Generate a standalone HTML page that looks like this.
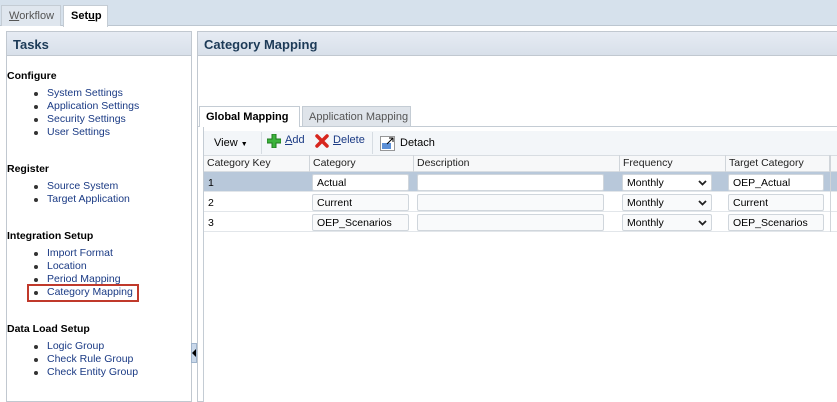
<!DOCTYPE html>
<html><head><style>
*{box-sizing:border-box;margin:0;padding:0;white-space:nowrap}
body{width:837px;height:402px;overflow:hidden;background:#fff;font-family:"Liberation Sans",Arial,sans-serif;font-size:11px;position:relative;color:#000}
.a{position:absolute}
.top{left:0;top:0;width:837px;height:26px;background:#d6e1ec;border-bottom:1px solid #bcc6d0}
.tab{top:5px;height:21px;border:1px solid #c4ccd4;border-bottom:none;font-size:11px;padding:4px 7px 0}
.hdr{height:25px;background:linear-gradient(#e6ebf3,#d8e0ea);border:1px solid #c1c8d0;font-weight:bold;font-size:13px;color:#1c3a57;padding:5px 6px}
.sec{font-weight:bold;font-size:10.5px;left:7px}
ul{position:absolute;left:47px;font-size:10.5px;color:#1a3a84;list-style:none;line-height:13px}
ul li:before{content:"";position:absolute;left:-13px;margin-top:5px;width:4px;height:4px;border-radius:2px;background:#333}
.th{top:155px;height:17px;border-right:1px solid #d0d5da;font-size:10.5px;padding:2px 3px;color:#222}
.row{left:204px;width:633px;height:20px;border-bottom:1px solid #e2e6ea}
.c{font-size:10.5px;padding:4px 3px;position:absolute}
.in{position:absolute;height:17px;border:1px solid #d0d6dc;border-radius:2px;background:#fff;font-size:10.5px;padding:2px 4px}
.dd{position:absolute;right:4px;top:5px}
</style></head><body>
<div class="a top"></div>
<div class="a tab" style="left:1px;width:60px;background:#dfe6ee;color:#555"><u>W</u>orkflow</div>
<div class="a tab" style="left:63px;width:45px;background:#fff;font-weight:bold;height:22px">Set<u>u</u>p</div>
<div class="a" style="left:6px;top:31px;width:186px;height:371px;border:1px solid #c1c8d0;background:#fff"></div>
<div class="a hdr" style="left:6px;top:31px;width:186px">Tasks</div>
<div class="a sec" style="top:70px">Configure</div>
<ul style="top:87px"><li>System Settings</li><li>Application Settings</li><li>Security Settings</li><li>User Settings</li></ul>
<div class="a sec" style="top:163px">Register</div>
<ul style="top:180px"><li>Source System</li><li>Target Application</li></ul>
<div class="a sec" style="top:230px">Integration Setup</div>
<ul style="top:247px"><li>Import Format</li><li>Location</li><li>Period Mapping</li><li>Category Mapping</li></ul>
<div class="a" style="left:27px;top:284px;width:112px;height:18px;border:2px solid #c0392b"></div>
<div class="a sec" style="top:323px">Data Load Setup</div>
<ul style="top:340px"><li>Logic Group</li><li>Check Rule Group</li><li>Check Entity Group</li></ul>
<div class="a" style="left:191px;top:343px;width:6px;height:20px;background:#c9d8ea;border:1px solid #9fb4cc"></div>
<div class="a" style="left:192px;top:349px;width:0;height:0;border-top:4px solid transparent;border-bottom:4px solid transparent;border-right:4px solid #000"></div>
<div class="a" style="left:197px;top:31px;width:645px;height:371px;border:1px solid #c1c8d0;background:#fff"></div>
<div class="a hdr" style="left:197px;top:31px;width:645px">Category Mapping</div>
<div class="a" style="left:198px;top:126px;width:639px;height:1px;background:#c4ccd4"></div>
<div class="a" style="left:203px;top:127px;width:634px;height:275px;border-left:1px solid #c4ccd4;background:#fff"></div>
<div class="a tab" style="left:199px;top:106px;width:101px;height:21px;background:#fff;font-weight:bold;padding:4px 6px">Global Mapping</div>
<div class="a tab" style="left:302px;top:106px;width:109px;height:20px;background:#dfe4ea;color:#555;padding:4px 6px">Application Mapping</div>
<div class="a" style="left:204px;top:131px;width:633px;height:24px;background:#f3f6f9"></div>
<div class="a" style="left:214px;top:137px">View <span style="font-size:7px">▼</span></div>
<div class="a" style="left:261px;top:132px;width:1px;height:22px;background:#d6dce2"></div>
<svg class="a" style="left:267px;top:134px" width="14" height="14"><path d="M5 0h4v5h5v4H9v5H5V9H0V5h5z" fill="#3db33d" stroke="#1e7a1e" stroke-width="1"/></svg>
<div class="a" style="left:285px;top:134px;color:#1a3a84"><u>A</u>dd</div>
<svg class="a" style="left:315px;top:134px" width="14" height="14"><path d="M2 2L12 12M12 2L2 12" stroke="#d7261e" stroke-width="3.5" stroke-linecap="round"/></svg>
<div class="a" style="left:333px;top:134px;color:#1a3a84"><u>D</u>elete</div>
<div class="a" style="left:372px;top:132px;width:1px;height:22px;background:#d6dce2"></div>
<svg class="a" style="left:380px;top:136px" width="15" height="15"><rect x="0.5" y="0.5" width="14" height="14" fill="#fff" stroke="#333" stroke-dasharray="1 1"/><rect x="2" y="7" width="9" height="6" fill="#5b8fd6"/><path d="M7 8L13 2M9 2h4v4" stroke="#000" fill="none"/></svg>
<div class="a" style="left:400px;top:137px">Detach</div>
<div class="a" style="left:204px;top:155px;width:633px;height:17px;background:#f7f8f9;border-top:1px solid #d8dde2;border-bottom:1px solid #d8dde2"></div>
<div class="a th" style="left:204px;width:106px">Category Key</div>
<div class="a th" style="left:310px;width:104px">Category</div>
<div class="a th" style="left:414px;width:206px">Description</div>
<div class="a th" style="left:620px;width:106px">Frequency</div>
<div class="a th" style="left:726px;width:104px">Target Category</div>
<div class="a row" style="top:172px;background:#b8c8da"></div>
<div class="a row" style="top:192px"></div>
<div class="a row" style="top:212px"></div>
<div class="a c" style="left:205px;top:173px">1</div>
<div class="a c" style="left:205px;top:193px">2</div>
<div class="a c" style="left:205px;top:213px">3</div>
<div class="in" style="left:312px;top:174px;width:97px">Actual</div>
<div class="in" style="left:312px;top:194px;width:97px;background:#f9fafb">Current</div>
<div class="in" style="left:312px;top:214px;width:97px;background:#f9fafb">OEP_Scenarios</div>
<div class="in" style="left:417px;top:174px;width:187px"></div>
<div class="in" style="left:417px;top:194px;width:187px;background:#f9fafb"></div>
<div class="in" style="left:417px;top:214px;width:187px;background:#f9fafb"></div>
<div class="in" style="left:622px;top:174px;width:90px">Monthly<svg class="dd" width="9" height="6"><path d="M1 1L4.5 4.5L8 1" stroke="#222" stroke-width="1.8" fill="none"/></svg></div>
<div class="in" style="left:622px;top:194px;width:90px;background:#f9fafb">Monthly<svg class="dd" width="9" height="6"><path d="M1 1L4.5 4.5L8 1" stroke="#222" stroke-width="1.8" fill="none"/></svg></div>
<div class="in" style="left:622px;top:214px;width:90px;background:#f9fafb">Monthly<svg class="dd" width="9" height="6"><path d="M1 1L4.5 4.5L8 1" stroke="#222" stroke-width="1.8" fill="none"/></svg></div>
<div class="in" style="left:728px;top:174px;width:96px">OEP_Actual</div>
<div class="in" style="left:728px;top:194px;width:96px;background:#f9fafb">Current</div>
<div class="in" style="left:728px;top:214px;width:96px;background:#f9fafb">OEP_Scenarios</div>
<div class="a" style="left:830px;top:155px;width:1px;height:77px;background:#d0d5da"></div>
</body></html>
